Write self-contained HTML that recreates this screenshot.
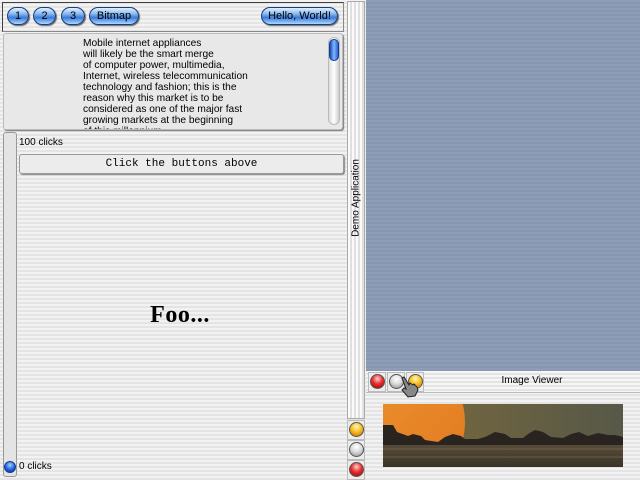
<!DOCTYPE html>
<html><head><meta charset="utf-8"><style>
*{box-sizing:border-box;margin:0;padding:0}
body{width:640px;height:480px;overflow:hidden;position:relative;font-family:"Liberation Sans",sans-serif;font-size:10px;color:#000;
background:repeating-linear-gradient(#f2f2f2 0 2px,#e4e4e4 2px 4px)}
.a{position:absolute}
.btn{position:absolute;height:18px;border-radius:9px;border:1px solid #1c3c78;
background:linear-gradient(#e0f0ff 0%,#8cbcf0 35%,#3c7ad8 60%,#a8d8ff 100%);
font-size:11px;line-height:16px;text-align:center;box-shadow:1px 1px 1px #666}
.cell{position:absolute;width:18px;height:20px;border:1px solid #bbb;background:#ececec}
.ball{position:absolute;width:15px;height:15px;border-radius:50%;border:1px solid #555}
.red{background:radial-gradient(circle at 50% 30%,#ffd0d0 0,#e83030 45%,#900 100%)}
.yel{background:radial-gradient(circle at 50% 30%,#fff8c0 0,#f8c020 45%,#d06000 100%)}
.gry{background:radial-gradient(circle at 50% 30%,#fff 0,#ddd 45%,#888 100%)}
</style></head><body>
<div class="a" style="left:2px;top:2px;width:342px;height:30px;border:1px solid #404040;border-right-color:#888;border-bottom-color:#888"></div>
<div class="btn" style="left:7px;top:7px;width:22px">1</div>
<div class="btn" style="left:33px;top:7px;width:23px">2</div>
<div class="btn" style="left:61px;top:7px;width:24px">3</div>
<div class="btn" style="left:89px;top:7px;width:50px">Bitmap</div>
<div class="btn" style="left:261px;top:7px;width:77px">Hello, World!</div>
<div class="a" style="left:3px;top:33px;width:340px;height:97px;background:#e8e8e8;border:1px solid #bbb;border-radius:3px;box-shadow:1px 1px 1px #777;overflow:hidden">
<div class="a" style="left:79px;top:4px;font-size:10.2px;line-height:11px;white-space:pre">Mobile internet appliances
will likely be the smart merge
of computer power, multimedia,
Internet, wireless telecommunication
technology and fashion; this is the
reason why this market is to be
considered as one of the major fast
growing markets at the beginning
of this millennium.</div>
</div>
<div class="a" style="left:328px;top:37px;width:12px;height:88px;border-radius:6px;background:linear-gradient(90deg,#ddd,#fff 50%,#ccc);border:1px solid #bbb"></div>
<div class="a" style="left:329px;top:39px;width:10px;height:22px;border-radius:5px;background:linear-gradient(90deg,#1c48b8,#7cb8ff 50%,#2c60d0);border:1px solid #123a90"></div>
<div class="a" style="left:3px;top:132px;width:14px;height:345px;background:#e4e4e4;border:1px solid #999;border-radius:3px"></div>
<div class="ball" style="left:4px;top:461px;width:12px;height:12px;border-color:#123a90;background:radial-gradient(circle at 50% 30%,#a0d0ff,#2060e0 55%,#0a2a90)"></div>
<div class="a" style="left:19px;top:137px;font-size:10px">100 clicks</div>
<div class="a" style="left:19px;top:154px;width:325px;height:20px;background:#ececec;border:1px solid #999;border-radius:3px;box-shadow:1px 1px 1px #888;font-family:'Liberation Mono',monospace;font-size:11px;line-height:18px;text-align:center">Click the buttons above</div>
<div class="a" style="left:120px;top:302px;width:120px;text-align:center;font-family:'Liberation Serif',serif;font-size:24px;font-weight:bold;letter-spacing:0.5px">Foo...</div>
<div class="a" style="left:19px;top:461px;font-size:10px">0 clicks</div>
<div class="a" style="left:347px;top:1px;width:18px;height:418px;border:1px solid #aaa;background:repeating-linear-gradient(90deg,#fafafa 0 2px,#e0e0e0 2px 4px)"></div>
<div class="a" style="left:356px;top:198px;transform:translate(-50%,-50%) rotate(-90deg);white-space:nowrap;font-size:10px">Demo Application</div>
<div class="cell" style="left:347px;top:420px"></div><div class="ball yel" style="left:349px;top:422px"></div>
<div class="cell" style="left:347px;top:440px"></div><div class="ball gry" style="left:349px;top:442px"></div>
<div class="cell" style="left:347px;top:460px"></div><div class="ball red" style="left:349px;top:462px"></div>
<div class="a" style="left:366px;top:0;width:274px;height:371px;background:repeating-linear-gradient(#8d9db8 0 2px,#8797b2 2px 4px)"></div>
<div class="a" style="left:366px;top:371px;width:274px;height:22px;background:repeating-linear-gradient(#f6f6f6 0 2px,#e4e4e4 2px 4px);border-bottom:1px solid #bbb"></div>
<div class="cell" style="left:368px;top:372px;height:20px"></div><div class="ball red" style="left:370px;top:374px"></div>
<div class="cell" style="left:387px;top:372px;height:20px"></div><div class="ball gry" style="left:389px;top:374px"></div>
<div class="cell" style="left:406px;top:372px;height:20px"></div><div class="ball yel" style="left:408px;top:374px"></div>
<svg class="a" style="left:396px;top:376px" width="26" height="22" viewBox="0 0 26 22"><path d="M6 2 L8 1 L13 9 L14 7 L17 9 L18 8 L21 11 L22 14 L19 20 L12 21 L6 14 L8 12 L10 13 Z" fill="#888" stroke="#222" stroke-width="1"/></svg>
<div class="a" style="left:432px;top:375px;width:200px;text-align:center;font-size:10px">Image Viewer</div>
<svg class="a" style="left:383px;top:404px" width="240" height="63" viewBox="0 0 240 63">
<defs><linearGradient id="sky" x1="0" x2="1"><stop offset="0" stop-color="#7c6a3c"/><stop offset="1" stop-color="#565848"/></linearGradient>
<linearGradient id="sun" x1="0" x2="1" y1="0" y2="1"><stop offset="0" stop-color="#f09830"/><stop offset="1" stop-color="#e07820"/></linearGradient>
<linearGradient id="w" x1="0" x2="0" y1="0" y2="1"><stop offset="0" stop-color="#5a4e3a"/><stop offset="1" stop-color="#3a3428"/></linearGradient></defs>
<rect width="240" height="63" fill="url(#sky)"/>
<circle cx="10" cy="18" r="72" fill="url(#sun)"/>
<rect y="39" width="240" height="24" fill="url(#w)"/>
<path d="M0 21 L10 21 L14 28 L25 32 L30 30 L38 32 L42 36 L55 38 L62 33 L70 30 L78 32 L82 35 L95 35 L102 33 L112 28 L122 30 L128 34 L140 34 L145 30 L152 26 L160 28 L168 33 L180 34 L188 30 L196 28 L205 32 L215 29 L225 31 L232 31 L240 33 L240 41 L0 41 Z" fill="#2a2420"/>
<rect y="44" width="240" height="2" fill="#6a5e48" opacity=".6"/>
<rect y="52" width="240" height="2" fill="#6a5e48" opacity=".5"/>
</svg>
</body></html>
